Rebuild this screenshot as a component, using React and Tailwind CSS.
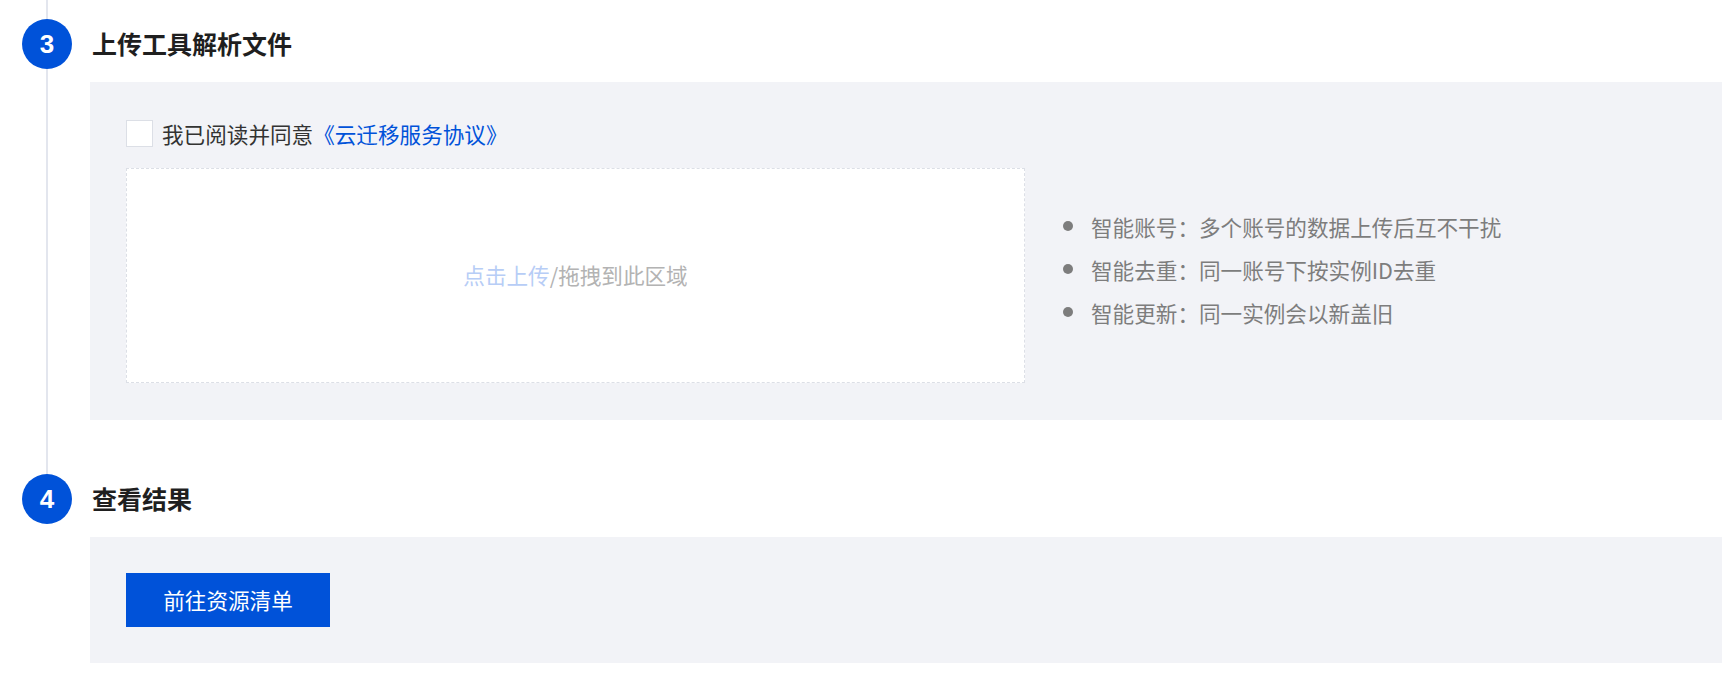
const Step = ({ num, title, children, last, first }) => (
  <div className="flex">
    {/* timeline column */}
    <div className="flex w-[50px] flex-col items-center ml-[22px]">
      {first && <div className="h-[19px] w-[2px] bg-[#e3e6ee]" />}
      <div className="flex h-[50px] w-[50px] shrink-0 items-center justify-center rounded-full bg-[#0052d9] text-[26px] font-bold text-white [font-family:'Liberation_Sans',Arial,sans-serif]">
        {num}
      </div>
      {!last && <div className="w-[2px] flex-1 bg-[#e3e6ee]" />}
    </div>

    {/* content */}
    <div className={`flex-1 ml-[18px] ${first ? "pt-[19px]" : ""} ${last ? "" : "pb-[54px]"}`}>
      <div className="flex h-[50px] items-center pl-[2px] text-[25px] font-bold text-[#1f1f1f]">
        {title}
      </div>
      <div className="mt-[13px] bg-[#f2f3f7]">{children}</div>
    </div>
  </div>
);

const tips = [
  "智能账号：多个账号的数据上传后互不干扰",
  "智能去重：同一账号下按实例ID去重",
  "智能更新：同一实例会以新盖旧",
];

export default function App() {
  return (
    <div className="min-h-[692px] bg-white [font-family:'Noto_Sans_CJK_SC','Noto_Sans',sans-serif]">
      <Step num="3" title="上传工具解析文件" first>
        <div className="pl-[36px] pt-[38px] pb-[37px]">
          {/* agreement */}
          <label className="flex h-[27px] items-center gap-[9px] text-[21.6px] leading-none text-[#333]">
            <span className="h-[27px] w-[27px] border border-[#dcdfe6] bg-white" />
            <span>
              我已阅读并同意<span className="text-[#0052d9]">《云迁移服务协议》</span>
            </span>
          </label>

          <div className="mt-[21px] flex items-center">
            {/* upload area */}
            <div className="flex h-[215px] w-[899px] items-center justify-center border border-dashed border-[#dcdfe6] bg-white text-[21.6px] text-[#b3b3b3]">
              <span className="text-[#b7cdf6]">点击上传</span>/拖拽到此区域
            </div>

            {/* tips */}
            <ul className="ml-[38px] mb-[13px] text-[21.6px] leading-[43px] text-[#7d7d7d]">
              {tips.map((t) => (
                <li key={t} className="flex items-center gap-[18px]">
                  <span className="h-[10px] w-[10px] rounded-full bg-[#7d7d7d]" />
                  {t}
                </li>
              ))}
            </ul>
          </div>
        </div>
      </Step>

      <Step num="4" title="查看结果" last>
        <div className="px-[36px] py-[36px]">
          <button className="h-[54px] w-[204px] bg-[#0052d9] text-[21.6px] text-white">
            前往资源清单
          </button>
        </div>
      </Step>
    </div>
  );
}
